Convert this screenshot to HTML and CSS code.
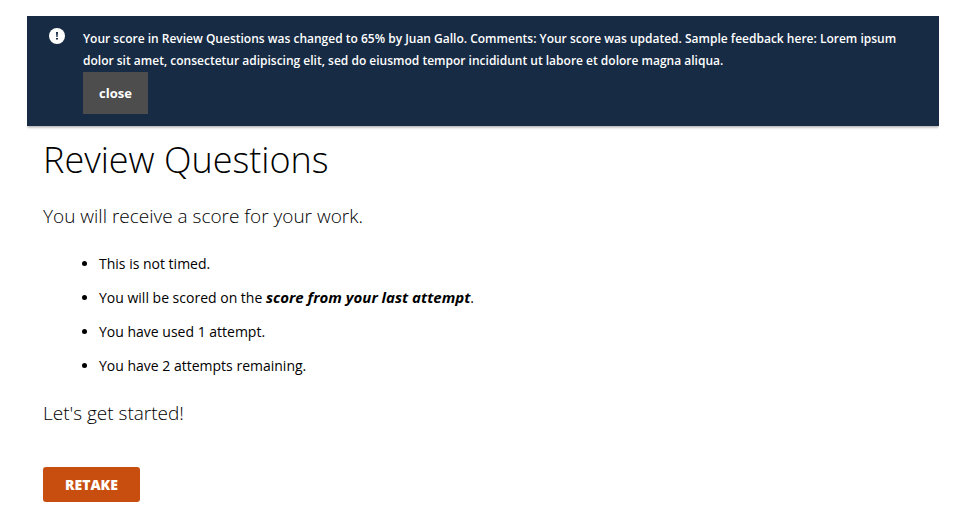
FILE: index.html
```html
<!DOCTYPE html>
<html lang="en">
<head>
    <meta charset="UTF-8">
    <meta name="viewport" content="width=device-width, initial-scale=1.0">
    <title>Review Questions</title>
    <link rel="stylesheet" href="styles.css">
</head>
<body>
    <div class="notice" role="alert">
        <svg class="notice-icon" viewBox="0 0 16 16" aria-hidden="true">
            <circle cx="8" cy="8" r="8" fill="#fff"/>
            <path d="M7 4h2l-.4 5H7.400z" fill="#172b44"/>
            <rect x="7" y="10" width="2" height="1.500" fill="#172b44"/>
        </svg>
        <div class="notice-body">
            <p>Your score in Review Questions was changed to 65% by Juan Gallo. Comments: Your score was updated. Sample feedback here: Lorem ipsum dolor sit amet, consectetur adipiscing elit, sed do eiusmod tempor incididunt ut labore et dolore magna aliqua.</p>
            <button type="button" class="close">close</button>
        </div>
    </div>

    <main>
        <h1>Review Questions</h1>
        <p class="lead">You will receive a score for your work.</p>
        <ul>
            <li>This is not timed.</li>
            <li>You will be scored on the <strong>score from your last attempt</strong>.</li>
            <li>You have used 1 attempt.</li>
            <li>You have 2 attempts remaining.</li>
        </ul>
        <p class="lead">Let's get started!</p>
        <button type="button" class="retake">RETAKE</button>
    </main>
</body>
</html>
```
FILE: styles.css
```css
body {
    margin: 16px 23px 0 27px;
    background-color: #fff;
    color: #000;
    font-family: "Open Sans", sans-serif;
    font-size: 14px;
}

/* Score change message */
.notice {
    display: flex;
    gap: 18px;
    padding: 12px 16px 12px 22px;
    background-color: #172b44;
    color: #fff;
    box-shadow: 0 1px 3px rgba(0,0,0,0.4);
}
.notice-icon { flex: none; width: 16px; height: 16px; }
.notice p { margin: 0; font-size: 12px; font-weight: 600; line-height: 22px; }

button { border: none; color: #fff; font-family: inherit; cursor: pointer; }
.close {
    display: block;
    height: 42px;
    padding: 0 16px;
    background-color: #4d4d4d;
    font-size: 13px;
    font-weight: 700;
}

main { padding: 0 16px; }
h1 { margin: 8px 0 16px; font-size: 36px; font-weight: 300; line-height: 52px; }
.lead { margin: 0; font-size: 19px; font-weight: 300; line-height: 28px; }
ul { margin: 23px 0 22px; padding-left: 56px; }
li { margin-bottom: 12px; line-height: 22px; }
strong { font-size: 15px; font-style: italic; font-weight: 700; line-height: 16px; }
.retake {
    height: 35px;
    margin-top: 40px;
    padding: 0 22px;
    border-radius: 3px;
    background-color: #c84e10;
    font-size: 14px;
    font-weight: 800;
}
```
